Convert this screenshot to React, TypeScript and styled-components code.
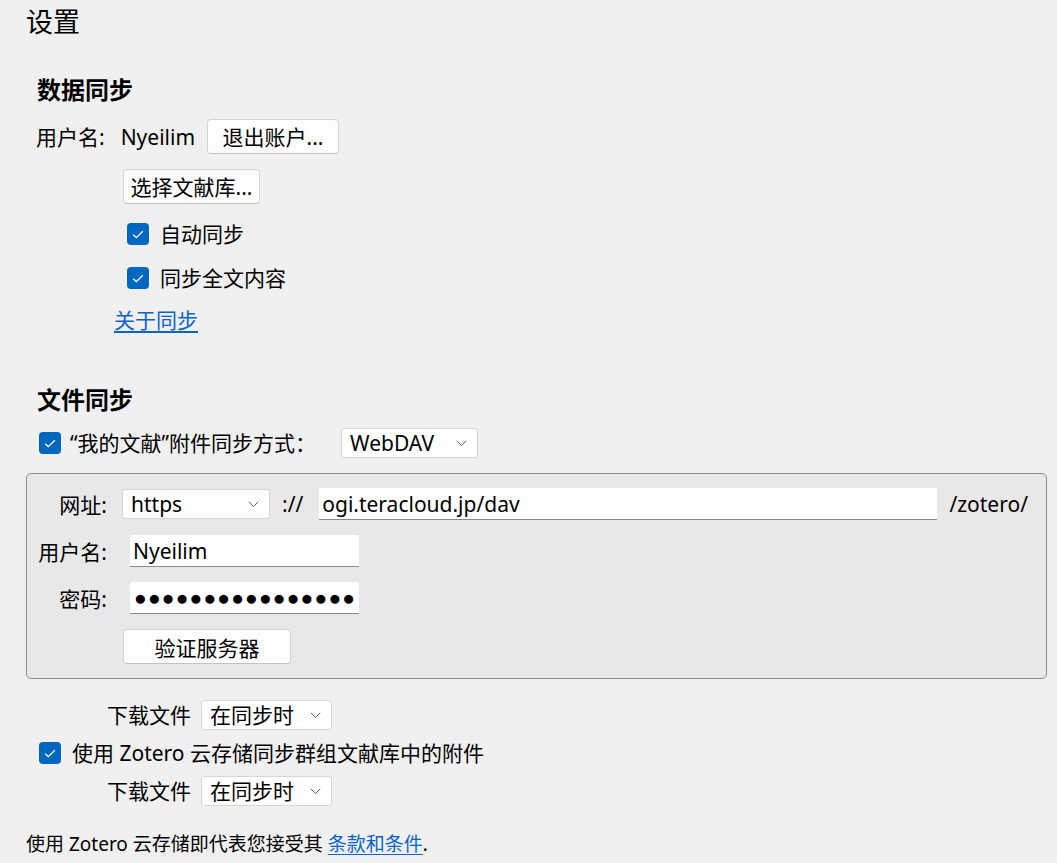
import React from "react";
import styled, { createGlobalStyle } from "styled-components";

const Global = createGlobalStyle`
  html, body { margin: 0; padding: 0; background: #f0f0f0; }
  body {
    font-family: "Noto Sans", "Noto Sans CJK SC", sans-serif;
    font-size: 21px;
    color: #000;
  }
  * { box-sizing: border-box; }
`;

const Page = styled.div`
  width: 1057px;
  height: 863px;
  overflow: hidden;
  padding: 7px 11px 0 26px;
  display: flex;
  flex-direction: column;
`;

const Title = styled.h1`
  margin: 0;
  font-size: 27px;
  font-weight: 400;
  line-height: 30px;
  height: 30px;
`;

const Section = styled.section<{ $top: number }>`
  margin-top: ${(p) => p.$top}px;
  display: flex;
  flex-direction: column;
`;

const Heading = styled.h2`
  margin: 0 0 0 11px;
  font-size: 24px;
  font-weight: 700;
  line-height: 30px;
  height: 30px;
`;

const Row = styled.div<{ $top: number; $left: number; $h?: number }>`
  display: flex;
  align-items: center;
  margin-top: ${(p) => p.$top}px;
  margin-left: ${(p) => p.$left}px;
  height: ${(p) => p.$h ?? 30}px;
  line-height: 24px;
  white-space: nowrap;
`;

const Text = styled.span<{ $gap?: number }>`
  margin-right: ${(p) => p.$gap ?? 0}px;
`;

const Button = styled.button<{ $w: number }>`
  width: ${(p) => p.$w}px;
  height: 35px;
  padding: 0;
  font: inherit;
  font-size: 21px;
  color: #000;
  background: #fdfdfd;
  border: 1px solid #d4d4d4;
  border-bottom-color: #c2c2c2;
  border-radius: 4px;
  display: flex;
  align-items: center;
  justify-content: center;
  flex: none;
`;

const CheckBox = styled.span<{ $gap: number }>`
  width: 22px;
  height: 22px;
  border-radius: 4px;
  background: #0067c0;
  display: inline-flex;
  align-items: center;
  justify-content: center;
  margin-right: ${(p) => p.$gap}px;
  flex: none;
`;

const Link = styled.a`
  color: #0a64c8;
  text-decoration: underline;
  text-underline-offset: 3px;
  cursor: pointer;
`;

const SelectBox = styled.div<{ $w: number; $h?: number }>`
  width: ${(p) => p.$w}px;
  height: ${(p) => p.$h ?? 30}px;
  background: #fefefe;
  border: 1px solid #d6d6d6;
  border-radius: 3px;
  display: flex;
  align-items: center;
  justify-content: space-between;
  padding: 0 10px 0 8px;
  flex: none;
`;

const Fieldset = styled.div`
  margin-top: 15px;
  width: 1021px;
  height: 206px;
  background: #e8e8e8;
  border: 1px solid #8d8d8d;
  border-radius: 5px;
  padding: 14px 18px 0 11px;
  display: grid;
  grid-template-columns: 69px 1fr;
  grid-template-rows: 32px 32px 32px 35px;
  row-gap: 15px;
  column-gap: 15px;
  align-items: center;
`;

const FieldLabel = styled.span`
  text-align: right;
  white-space: nowrap;
`;

const FieldLine = styled.div<{ $indent?: number }>`
  display: flex;
  align-items: center;
  height: 100%;
  padding-left: ${(p) => p.$indent ?? 0}px;
  white-space: nowrap;
`;

const TextInput = styled.div<{ $w?: number; $grow?: boolean }>`
  height: 32px;
  width: ${(p) => (p.$w ? `${p.$w}px` : "auto")};
  flex: ${(p) => (p.$grow ? "1" : "none")};
  background: #fff;
  border-bottom: 1px solid #8a8a8a;
  border-radius: 2px 2px 0 0;
  display: flex;
  align-items: center;
  padding-left: 3px;
  overflow: hidden;
`;

const Dots = styled.span`
  font-family: "Liberation Sans", sans-serif;
  font-size: 21px;
  letter-spacing: 1.2px;
  padding-left: 1px;
`;

const Sep = styled.span<{ $l: number; $r: number }>`
  margin-left: ${(p) => p.$l}px;
  margin-right: ${(p) => p.$r}px;
`;

const Footer = styled.div`
  margin-top: 26px;
  font-size: 19px;
  line-height: 24px;
  white-space: nowrap;
`;

const Chevron = () => (
  <svg width="11" height="7" viewBox="0 0 11 7">
    <path d="M0.8 0.8 L5.5 5.6 L10.2 0.8" fill="none" stroke="#5f5f5f" strokeWidth="1" />
  </svg>
);

const Check = ({ gap }: { gap: number }) => (
  <CheckBox $gap={gap}>
    <svg width="12" height="9" viewBox="0 0 12 9">
      <path d="M1.2 4.8 L4.3 7.6 L10.8 1.2" fill="none" stroke="#fff" strokeWidth="1.3" />
    </svg>
  </CheckBox>
);

const Select = ({ w, value, h }: { w: number; value: string; h?: number }) => (
  <SelectBox $w={w} $h={h}>
    <span>{value}</span>
    <Chevron />
  </SelectBox>
);

export default function App() {
  return (
    <>
      <Global />
      <Page>
        <Title>设置</Title>

        <Section $top={38}>
          <Heading>数据同步</Heading>
          <Row $top={14} $left={10} $h={35}>
            <Text $gap={16}>用户名:</Text>
            <Text $gap={12}>Nyeilim</Text>
            <Button $w={132}>退出账户...</Button>
          </Row>
          <Row $top={15} $left={97} $h={35}>
            <Button $w={137}>选择文献库...</Button>
          </Row>
          <Row $top={15} $left={101}>
            <Check gap={11} />
            <Text>自动同步</Text>
          </Row>
          <Row $top={14} $left={101}>
            <Check gap={11} />
            <Text>同步全文内容</Text>
          </Row>
          <Row $top={12} $left={88}>
            <Link>关于同步</Link>
          </Row>
        </Section>

        <Section $top={50}>
          <Heading>文件同步</Heading>
          <Row $top={13} $left={13}>
            <Check gap={9} />
            <Text $gap={25}>“我的文献”附件同步方式：</Text>
            <Select w={137} value="WebDAV" />
          </Row>

          <Fieldset>
            <FieldLabel>网址:</FieldLabel>
            <FieldLine>
              <Select w={148} value="https" />
              <Sep $l={12} $r={16}>://</Sep>
              <TextInput $grow>ogi.teracloud.jp/dav</TextInput>
              <Sep $l={12} $r={0}>/zotero/</Sep>
            </FieldLine>

            <FieldLabel>用户名:</FieldLabel>
            <FieldLine $indent={8}>
              <TextInput $w={229}>Nyeilim</TextInput>
            </FieldLine>

            <FieldLabel>密码:</FieldLabel>
            <FieldLine $indent={8}>
              <TextInput $w={229}>
                <Dots>●●●●●●●●●●●●●●●●</Dots>
              </TextInput>
            </FieldLine>

            <span />
            <FieldLine $indent={1}>
              <Button $w={168}>验证服务器</Button>
            </FieldLine>
          </Fieldset>

          <Row $top={21} $left={81}>
            <Text $gap={10}>下载文件</Text>
            <Select w={131} value="在同步时" />
          </Row>
          <Row $top={8} $left={13}>
            <Check gap={11} />
            <Text>使用 Zotero 云存储同步群组文献库中的附件</Text>
          </Row>
          <Row $top={8} $left={81}>
            <Text $gap={10}>下载文件</Text>
            <Select w={131} value="在同步时" />
          </Row>
        </Section>

        <Footer>
          使用 Zotero 云存储即代表您接受其 <Link>条款和条件</Link>.
        </Footer>
      </Page>
    </>
  );
}
